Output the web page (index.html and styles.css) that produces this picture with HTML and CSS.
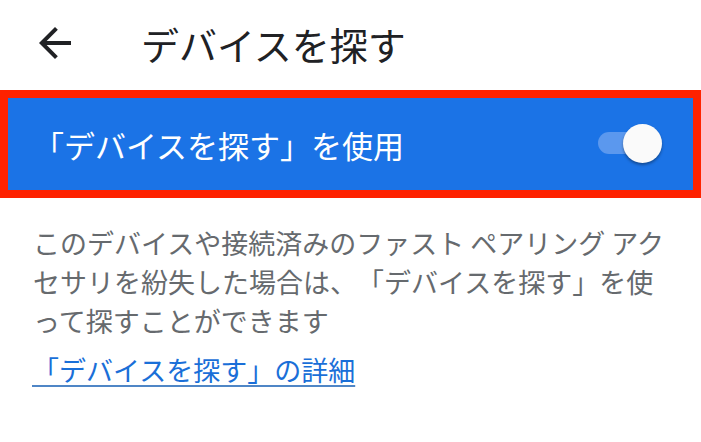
FILE: index.html
```html
<!DOCTYPE html>
<html lang="ja">
<head>
<meta charset="utf-8">
<link rel="stylesheet" href="styles.css">
</head>
<body>
<div class="page">
  <header class="toolbar">
    <svg class="back" viewBox="0 0 24 24" width="48" height="48"><path d="M20 11H7.83l5.59-5.59L12 4l-8 8 8 8 1.41-1.41L7.83 13H20v-2z" fill="#202124"/></svg>
    <h1 class="title">デバイスを探す</h1>
  </header>
  <div class="switchbar">
    <span class="switch-label">「デバイスを探す」を使用</span>
    <span class="switch">
      <span class="track"></span>
      <span class="thumb"></span>
    </span>
  </div>
  <p class="desc">このデバイスや接続済みのファスト ペアリング アクセサリを紛失した場合は、「デバイスを探す」を使って探すことができます</p>
  <a class="link" href="#">「デバイスを探す」の詳細</a>
</div>
</body>
</html>
```
FILE: styles.css
```css
html, body {
  margin: 0;
  padding: 0;
  background: #ffffff;
}
.page {
  width: 701px;
  height: 442px;
  overflow: hidden;
  font-family: "Noto Sans CJK JP", "Noto Sans", sans-serif;
  text-spacing-trim: space-all;
}
.toolbar {
  height: 90px;
  display: flex;
  align-items: center;
  padding-left: 31px;
  box-sizing: border-box;
}
.back {
  display: block;
  flex: none;
  margin-top: -4px;
}
.title {
  margin: 0 0 0 62px;
  font-size: 38px;
  font-weight: 400;
  color: #202124;
  line-height: 1;
  margin-top: -3px;
}
.switchbar {
  height: 108px;
  box-sizing: border-box;
  border: 8px solid #fe2200;
  background: #1b73e6;
  display: flex;
  align-items: center;
  justify-content: space-between;
  padding: 0 31px 0 25px;
}
.switch-label {
  color: #ffffff;
  font-size: 31px;
  line-height: 1;
}
.switch {
  position: relative;
  width: 64px;
  height: 40px;
  flex: none;
}
.track {
  position: absolute;
  left: 0;
  top: 8px;
  width: 58px;
  height: 22px;
  border-radius: 11px;
  background: #5b98ee;
}
.thumb {
  position: absolute;
  right: 0;
  top: 0;
  width: 39px;
  height: 39px;
  border-radius: 50%;
  background: #fafafa;
  box-shadow: 0 2px 3px rgba(0, 0, 0, 0.35);
}
.desc {
  margin: 25px 0 0 0;
  padding: 0 24px 0 33px;
  font-size: 27px;
  line-height: 39px;
  color: #666a6e;
}
.link {
  display: inline-block;
  margin: 10px 0 0 32px;
  font-size: 27px;
  line-height: 39px;
  color: #1a6fd8;
  text-decoration: underline;
  text-decoration-color: #4f86c6;
  text-underline-offset: 4px;
}
```
